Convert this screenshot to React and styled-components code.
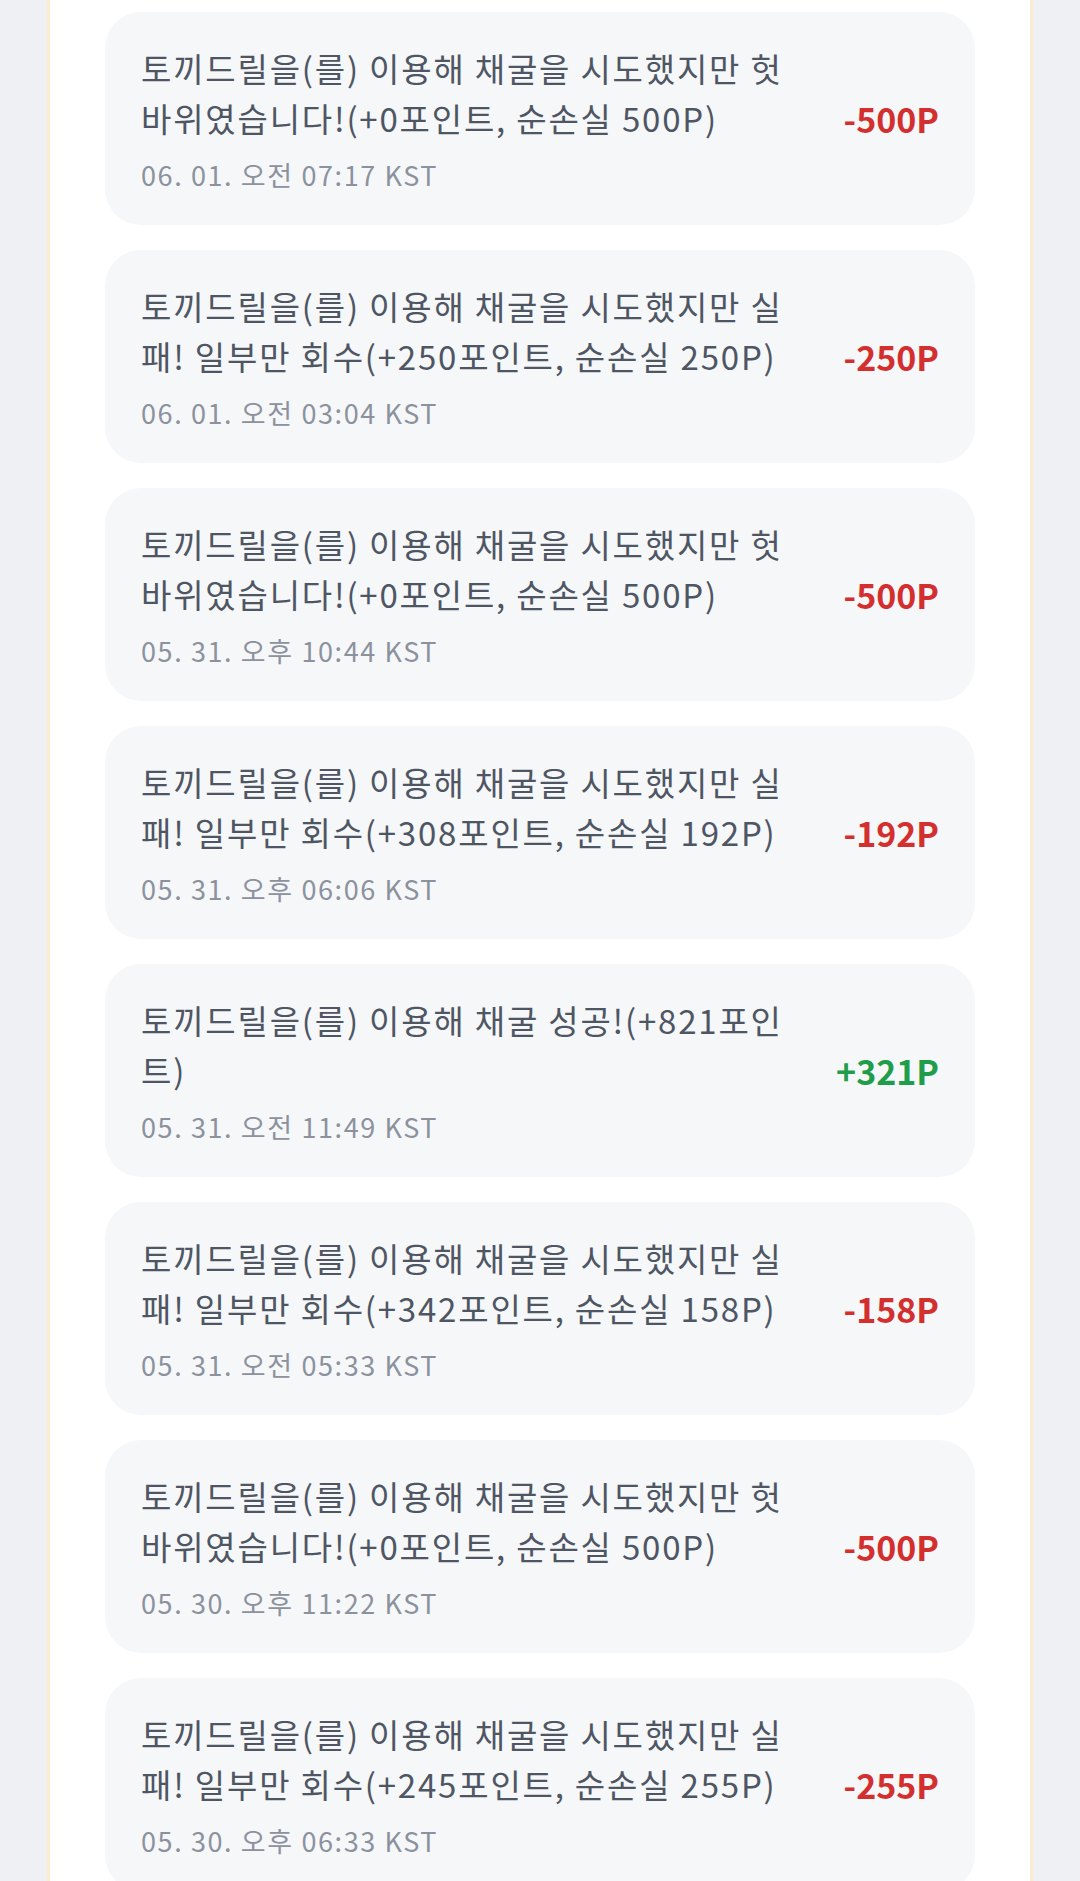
import React from 'react';
import styled, { createGlobalStyle } from 'styled-components';

const GlobalStyle = createGlobalStyle`
  html, body {
    margin: 0;
    padding: 0;
    background: #eef0f3;
  }
  body {
    font-family: "Noto Sans CJK KR", "Noto Sans", sans-serif;
  }
`;

const Page = styled.div`
  display: flex;
  justify-content: center;
  min-height: 1881px;
  padding: 0 47px;
  box-sizing: border-box;
  overflow: hidden;
`;

const Panel = styled.main`
  flex: 1;
  background: #ffffff;
  border-left: 3px solid #fbecce;
  border-right: 3px solid #fbecce;
  padding: 12px 55px 0;
  display: flex;
  flex-direction: column;
  gap: 25px;
`;

const Card = styled.div`
  display: flex;
  align-items: center;
  background: #f6f7f9;
  border-radius: 36px;
  padding: 30px 36px 30px 36px;
  min-height: 213px;
  box-sizing: border-box;
`;

const Body = styled.div`
  flex: 1;
  min-width: 0;
`;

const Message = styled.div`
  font-size: 33px;
  line-height: 50px;
  color: #4e5664;
  letter-spacing: 1.8px;
`;

const DateText = styled.div`
  margin-top: 12px;
  font-size: 27px;
  line-height: 40px;
  color: #8b929e;
  letter-spacing: 1.6px;
`;

const Amount = styled.div`
  margin-left: 44px;
  white-space: nowrap;
  font-size: 34px;
  font-weight: 700;
  color: ${(p) => (p.$positive ? '#1f9d4b' : '#d32f2f')};
`;

const items = [
  { msg: '토끼드릴을(를) 이용해 채굴을 시도했지만 헛바위였습니다!(+0포인트, 순손실 500P)', date: '06. 01. 오전 07:17 KST', amount: '-500P' },
  { msg: '토끼드릴을(를) 이용해 채굴을 시도했지만 실패! 일부만 회수(+250포인트, 순손실 250P)', date: '06. 01. 오전 03:04 KST', amount: '-250P' },
  { msg: '토끼드릴을(를) 이용해 채굴을 시도했지만 헛바위였습니다!(+0포인트, 순손실 500P)', date: '05. 31. 오후 10:44 KST', amount: '-500P' },
  { msg: '토끼드릴을(를) 이용해 채굴을 시도했지만 실패! 일부만 회수(+308포인트, 순손실 192P)', date: '05. 31. 오후 06:06 KST', amount: '-192P' },
  { msg: '토끼드릴을(를) 이용해 채굴 성공!(+821포인트)', date: '05. 31. 오전 11:49 KST', amount: '+321P', positive: true },
  { msg: '토끼드릴을(를) 이용해 채굴을 시도했지만 실패! 일부만 회수(+342포인트, 순손실 158P)', date: '05. 31. 오전 05:33 KST', amount: '-158P' },
  { msg: '토끼드릴을(를) 이용해 채굴을 시도했지만 헛바위였습니다!(+0포인트, 순손실 500P)', date: '05. 30. 오후 11:22 KST', amount: '-500P' },
  { msg: '토끼드릴을(를) 이용해 채굴을 시도했지만 실패! 일부만 회수(+245포인트, 순손실 255P)', date: '05. 30. 오후 06:33 KST', amount: '-255P' },
];

export default function App() {
  return (
    <>
      <GlobalStyle />
      <Page>
        <Panel>
          {items.map((it, i) => (
            <Card key={i}>
              <Body>
                <Message>{it.msg}</Message>
                <DateText>{it.date}</DateText>
              </Body>
              <Amount $positive={it.positive}>{it.amount}</Amount>
            </Card>
          ))}
        </Panel>
      </Page>
    </>
  );
}
